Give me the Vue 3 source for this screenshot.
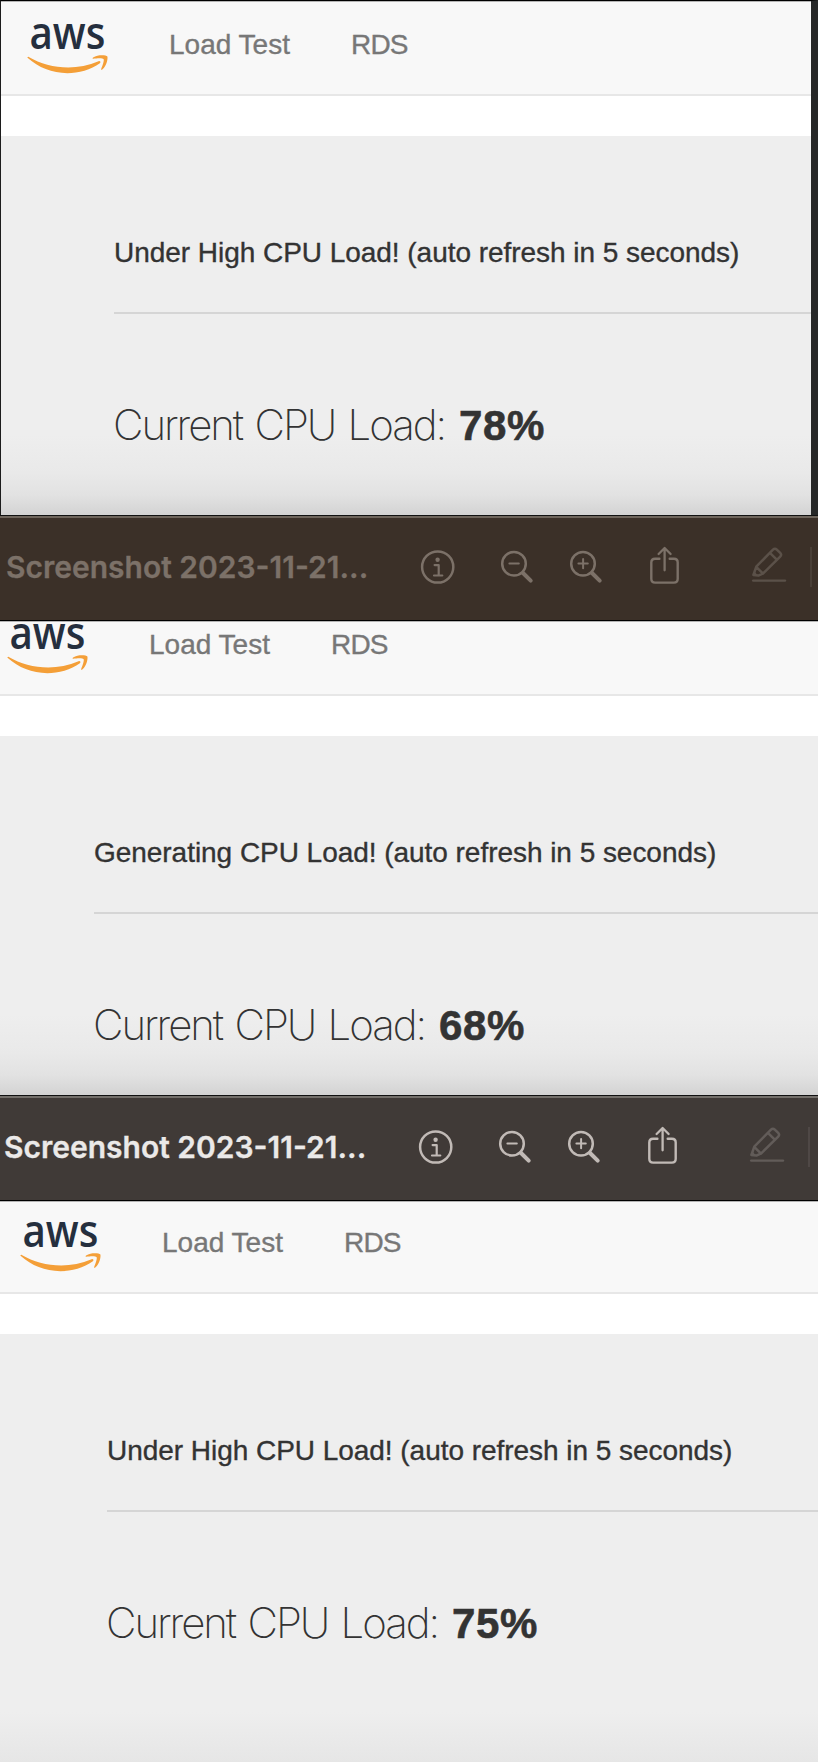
<script setup>
const windows = [
  { key: 'first', message: 'Under High CPU Load! (auto refresh in 5 seconds)', load: '78%', toolbar: null },
  { key: 'second', message: 'Generating CPU Load! (auto refresh in 5 seconds)', load: '68%', toolbar: 'inactive' },
  { key: 'third', message: 'Under High CPU Load! (auto refresh in 5 seconds)', load: '75%', toolbar: 'active' },
]
</script>

<template>
  <main class="desktop">
    <section v-for="w in windows" :key="w.key" class="window" :class="w.key">
      <header v-if="w.toolbar" class="toolbar" :class="w.toolbar">
        <span class="title">Screenshot 2023-11-21...</span>
        <svg class="icon info" width="36" height="44" viewBox="0 0 36 44">
          <circle cx="17.7" cy="22" r="15.6" stroke-width="2.5" />
          <circle cx="17.6" cy="14.8" r="2.2" class="solid" />
          <path d="M14.6 20.1H18.7V30.4M14 30.5H22.3" stroke-width="2.2" />
        </svg>
        <svg class="icon minus" width="34" height="44" viewBox="0 0 34 44">
          <circle cx="14" cy="18.7" r="11.8" stroke-width="2.5" />
          <path d="M9.4 18.6H18.8" stroke-width="2" />
          <path d="M23 28L30.7 35.7" stroke-width="4" />
        </svg>
        <svg class="icon plus" width="34" height="44" viewBox="0 0 34 44">
          <circle cx="14" cy="18.7" r="11.8" stroke-width="2.5" />
          <path d="M9.4 18.6H18.8M14.1 13.9V23.3" stroke-width="2" />
          <path d="M23 28L30.7 35.7" stroke-width="4" />
        </svg>
        <svg class="icon share" width="34" height="44" viewBox="0 0 34 44">
          <path d="M11.4 13.7H7.1Q3.3 13.7 3.3 17.5V33.7Q3.3 37.6 7.1 37.6H25.9Q29.7 37.6 29.7 33.7V17.5Q29.7 13.7 25.9 13.7H21.7" stroke-width="2.4" />
          <path d="M16.6 25.3V3.5M10.6 9L16.6 3L22.6 9" stroke-width="2.3" />
        </svg>
        <svg class="icon pencil" width="36" height="44" viewBox="0 0 36 44">
          <path d="M2.4 30L5.3 21.7L22 4.6Q23.9 2.7 25.8 4.6L29.2 7.9Q31 9.8 29.2 11.6L12.2 28.4L7.4 30.6ZM18.9 7.8L26 14.8M5.7 22.4L12 28.6" stroke-width="2.5" />
          <path d="M3.6 26.8L2.2 30.8H7.2Z" class="solid" />
          <path d="M2.2 35.6H34" stroke-width="2.4" />
        </svg>
        <i class="divider"></i>
      </header>
      <nav class="navbar">
        <svg class="logo" width="81" height="49" viewBox="0 0 304 184">
          <text x="9" y="91" textLength="285" lengthAdjust="spacingAndGlyphs">aws</text>
          <path d="M273.5 143.7c-32.9 24.3-80.7 37.2-121.8 37.2-57.6 0-109.5-21.3-148.7-56.7-3.1-2.8-.3-6.6 3.4-4.4 42.4 24.6 94.7 39.5 148.8 39.5 36.5 0 76.6-7.6 113.5-23.2 5.5-2.5 10.2 3.6 4.8 7.6z" />
          <path d="M287.2 128.1c-4.2-5.4-27.8-2.6-38.5-1.3-3.2.4-3.7-2.4-.8-4.5 18.8-13.2 49.7-9.4 53.3-5 3.6 4.5-1 35.4-18.6 50.2-2.7 2.3-5.3 1.1-4.1-1.9 4-9.9 12.9-32.2 8.7-37.5z" />
        </svg>
        <a class="link load-test">Load Test</a>
        <a class="link rds">RDS</a>
      </nav>
      <div class="jumbotron">
        <p class="message">{{ w.message }}</p>
        <hr class="rule" />
        <h1 class="load"><span class="label">Current CPU Load:</span><b class="value">{{ w.load }}</b></h1>
      </div>
    </section>
  </main>
</template>

<style>
body {
  margin: 0;
  background: #fff;
}
</style>

<style scoped>
.desktop {
  width: 818px;
  height: 1762px;
  overflow: hidden;
  font-family: "Liberation Sans", Arial, sans-serif;
}
.window {
  box-sizing: border-box;
  display: flex;
  flex-direction: column;
  overflow: hidden;
}
.first {
  --shift: 26px;
  --nav: 95px;
  height: 515px;
  border: solid #000;
  border-width: 1px 7px 0 1px;
  border-color: #000 #262727 #000 #1c1c1c;
}
.second {
  --shift: 7px;
  --nav: 75px;
  height: 580px;
}
.third {
  --shift: 20px;
  --nav: 93px;
  height: 667px;
}
.toolbar {
  box-sizing: border-box;
  flex: none;
  display: flex;
  align-items: center;
  height: 106px;
  padding-bottom: 3px;
  border-top: 1px solid #111;
  border-bottom: 1px solid #000;
}
.inactive {
  --ink: #7c7168;
  --dim: #5b5149;
  padding-left: 6px;
  color: #7c7168;
  background: #3b3028;
  box-shadow: inset 0 2px #6e655c;
}
.active {
  --ink: #c1bab6;
  --dim: #625c59;
  padding-left: 4px;
  color: #ebe9e8;
  background: #403a37;
  box-shadow: inset 0 2px #74706b;
}
.title {
  flex: none;
  width: 414px;
  padding-top: 1px;
  font: 600 30px/44px Inter, sans-serif;
  -webkit-text-stroke: 0.3px currentColor;
  white-space: nowrap;
}
.icon {
  flex: none;
  fill: none;
  stroke: var(--ink);
  stroke-linecap: round;
  stroke-linejoin: round;
}
.icon .solid {
  fill: var(--ink);
  stroke: none;
}
.minus { margin-left: 44px; }
.plus { margin-left: 35px; }
.share { margin-left: 45px; }
.pencil {
  margin-left: 69px;
  stroke: var(--dim);
}
.pencil .solid { fill: var(--dim); }
.divider {
  flex: none;
  width: 2px;
  height: 40px;
  margin-left: 23px;
  background: var(--dim);
  opacity: 0.45;
}
.navbar {
  box-sizing: border-box;
  flex: none;
  display: flex;
  align-items: flex-end;
  height: var(--nav);
  padding-left: var(--shift);
  background: #f8f8f8;
  border-top: 1px solid #b4b4b4;
  border-bottom: 2px solid #e7e7e7;
}
.logo {
  flex: none;
  margin-bottom: 20px;
  overflow: visible;
  fill: #f49f38;
}
.logo text {
  font: 600 167px "Open Sans", sans-serif;
  fill: #252f3e;
}
.link {
  flex: none;
  font-size: 28px;
  line-height: 40px;
  margin-bottom: 29px;
  color: #777;
  -webkit-text-stroke: 0.35px #777;
  white-space: nowrap;
}
.load-test {
  width: 182px;
  margin-left: 61px;
}
.rds { letter-spacing: -0.8px; }
.jumbotron {
  flex: 1;
  box-sizing: border-box;
  margin-top: 40px;
  padding: 97px 0 0 calc(var(--shift) + 87px);
  background: linear-gradient(to top, #d3d3d3, #e2e2e2 20px, #e9e9e9 42px, #eee 80px);
}
.third .jumbotron {
  background: linear-gradient(to top, #e6e6e6, #eee 50px);
}
.message {
  margin: 0;
  font-size: 28px;
  line-height: 40px;
  letter-spacing: -0.04px;
  color: #333;
  -webkit-text-stroke: 0.35px #333;
  white-space: nowrap;
}
.rule {
  height: 2px;
  margin: 39px 0 0;
  border: 0;
  background: #d5d5d5;
}
.load {
  display: flex;
  align-items: baseline;
  margin: 81px 0 0 -1px;
  font-size: 42px;
  line-height: 60px;
  color: #333;
  white-space: nowrap;
}
.label {
  width: 346px;
  font-family: Inter, sans-serif;
  font-weight: 200;
  letter-spacing: -2.05px;
  word-spacing: 2.6px;
}
.value {
  letter-spacing: 0.6px;
  -webkit-text-stroke: 0.6px #333;
}
</style>
